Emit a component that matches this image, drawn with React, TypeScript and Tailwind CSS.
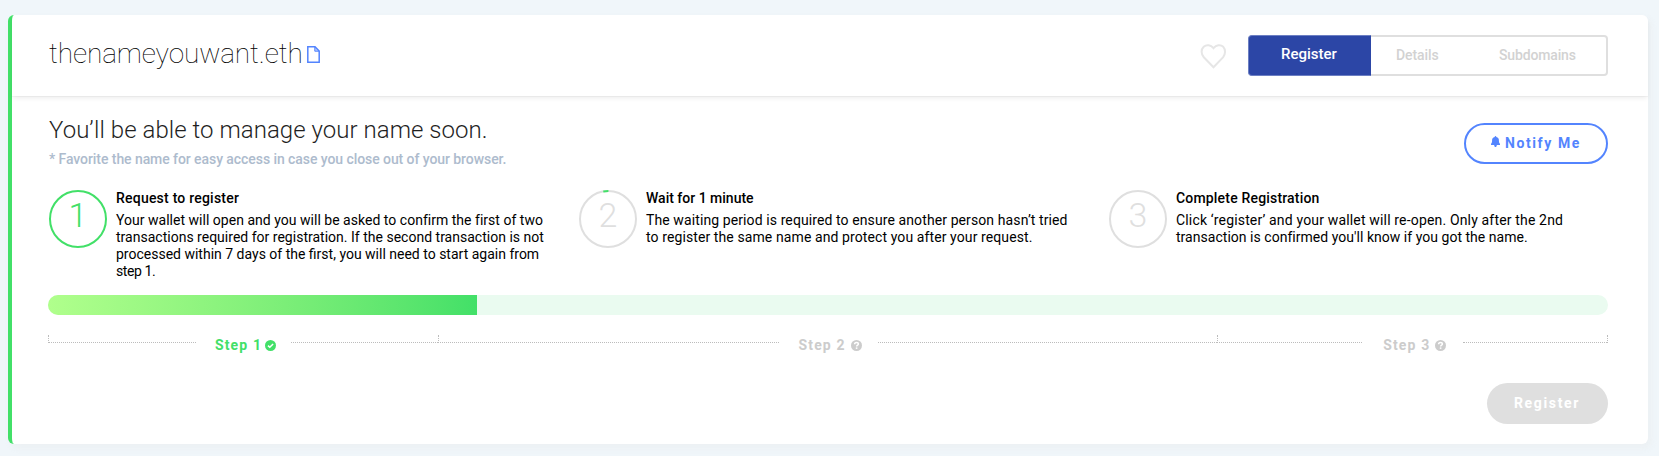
import type { ReactNode } from 'react';

type Line = { text: string; className: string };
type Step = { digit: string; title: string; lines: Line[]; active?: boolean; waiting?: boolean; titleClass: string };

const steps: Step[] = [
  {
    digit: '1',
    title: 'Request to register',
    lines: [
      { text: 'Your wallet will open and you will be asked to confirm the first of two', className: 'tracking-[0.02px]' },
      { text: 'transactions required for registration. If the second transaction is not', className: 'tracking-[0.01px]' },
      { text: 'processed within 7 days of the first, you will need to start again from', className: 'tracking-normal' },
      { text: 'step 1.', className: 'tracking-[-0.4px]' },
    ],
    active: true,
    titleClass: 'tracking-[0.22px]',
  },
  {
    digit: '2',
    title: 'Wait for 1 minute',
    lines: [
      { text: 'The waiting period is required to ensure another person hasn’t tried', className: 'tracking-[0.1px]' },
      { text: 'to register the same name and protect you after your request.', className: 'tracking-[0.1px]' },
    ],
    waiting: true,
    titleClass: 'tracking-normal',
  },
  {
    digit: '3',
    title: 'Complete Registration',
    lines: [
      { text: 'Click ‘register’ and your wallet will re-open. Only after the 2nd', className: 'tracking-[0.165px]' },
      { text: "transaction is confirmed you'll know if you got the name.", className: 'tracking-[0.03px]' },
    ],
    titleClass: 'tracking-[0.18px]',
  },
];

function StepCircle({ digit, active, waiting }: { digit: string; active?: boolean; waiting?: boolean }) {
  return (
    <div className={`relative mt-0.5 flex h-[58px] w-[58px] shrink-0 justify-center rounded-full border-2 ${active ? 'border-[#42e068] text-[#42e068]' : 'border-[#dfdfdf] text-[#dfdfdf]'}`}>
      <span className="pt-[3px] text-[34px] leading-10 font-[350]">{digit}</span>
      {waiting && (
        <svg className="absolute -top-0.5 left-[22px]" width="6" height="3" viewBox="0 0 6 3">
          <path d="M0.3 1.4 Q3 1 5.4 1" fill="none" stroke="#42e068" strokeWidth="2" />
        </svg>
      )}
    </div>
  );
}

function CheckIcon() {
  return (
    <svg width="11" height="11" viewBox="0 0 11 11" className="mt-px">
      <circle cx="5.5" cy="5.5" r="5.5" fill="#42e068" />
      <path d="M3 5.6 4.8 7.3 8.1 4" fill="none" stroke="#fff" strokeWidth="1.5" />
    </svg>
  );
}

function QuestionIcon() {
  return (
    <svg width="11" height="11" viewBox="0 0 11 11" className="mt-px">
      <circle cx="5.5" cy="5.5" r="5.5" fill="#ccc" />
      <path d="M3.6 4.2C3.6 3 4.4 2.4 5.5 2.4S7.4 3 7.4 4.1C7.4 5.3 5.6 5.2 5.6 6.6" fill="none" stroke="#fff" strokeWidth="1.5" />
      <rect x="4.8" y="7.4" width="1.6" height="1.5" fill="#fff" />
    </svg>
  );
}

function Segment({ label, icon, className, gap }: { label: string; icon: ReactNode; className: string; gap: string }) {
  return (
    <div className={`flex h-2 ${className}`}>
      <div className="h-2 flex-1 border-b border-l border-dotted border-[#bcbcbc]" />
      <div className={`flex shrink-0 items-center pt-2.5 text-sm leading-5 font-bold tracking-[1.15px] ${gap}`}>
        <span>{label}</span>
        {icon}
      </div>
      <div className="h-2 flex-1 border-b border-dotted border-[#bcbcbc]" />
    </div>
  );
}

export default function App() {
  return (
    <div className="h-[456px] overflow-hidden bg-[#f0f6fa] pt-[15px] pr-[11px] pl-2 font-[Roboto,sans-serif] whitespace-nowrap text-black">
      <main className="h-[429px] rounded-md border-l-4 border-[#42e068] bg-white shadow-[3px_4px_6px_rgba(229,229,229,0.3)]">
        <header className="flex h-[81px] items-center justify-between rounded-tr-md pr-10 pl-[37px] shadow-[0_3px_5px_-1px_rgba(0,0,0,0.08),0_1px_0_rgba(0,0,0,0.03)]">
          <h1 className="flex items-center pb-1 text-[28px] leading-9 font-thin tracking-[-0.12px]">
            thenameyouwant.eth
            <svg className="mt-0.5 ml-1" width="13" height="17" viewBox="0 0 13 17">
              <path d="M0.8 0.8H8L12.2 5V16.2H0.8Z" fill="none" stroke="#5384fe" strokeWidth="1.5" />
              <path d="M7.8 1V5.2H12" fill="#5384fe" fillOpacity=".4" stroke="#5384fe" />
            </svg>
          </h1>
          <div className="flex items-center">
            <svg className="mt-px mr-[22px]" width="26" height="25" viewBox="0 0 26 25">
              <path d="M13.5 23.3 3.8 13.2C0.9 10.1 0.9 5.4 3.7 2.8 6.6 0.2 10.7 0.8 13.5 4.2 16.3 0.8 20.4 0.2 23.3 2.8 25.6 5.4 25.6 10.1 23.2 13.2Z" fill="none" stroke="#e6e6e6" strokeWidth="2" />
            </svg>
            <nav className="flex h-[41px] w-[360px] rounded-[4px] bg-white text-sm font-medium text-[#d2d2d2]">
              <div className="flex w-[123px] items-center justify-center rounded-l-[4px] border border-[#6c7fc3] border-r-[#2c46a6] bg-[#2c46a6] pr-px pb-0.5 text-[15px] text-white">Register</div>
              <div className="flex flex-1 items-center rounded-r-[4px] border-2 border-l-0 border-[#dfdfdf] pb-0.5 pl-[25px]">
                <span className="w-[103px] tracking-[-0.1px]">Details</span>
                <span className="tracking-[-0.15px]">Subdomains</span>
              </div>
            </nav>
          </div>
        </header>

        <section className="flex flex-col pr-10 pl-9">
          <div className="flex justify-between pt-[19px]">
            <div className="pl-px">
              <h2 className="text-2xl leading-[30px] font-light tracking-[0.04px] text-[#1f1f1f]">You’ll be able to manage your name soon.</h2>
              <p className="mt-1 text-sm leading-5 font-medium tracking-[-0.07px] text-[#adbbcd]">
                * Favorite the name for easy access in case you close out of your browser.
              </p>
            </div>
            <button className="mt-2 flex h-[41px] w-36 items-center rounded-full border-2 border-[#5384fe] pb-0.5 pl-[25px] text-sm font-bold tracking-[1.6px] text-[#5384fe]">
              <svg className="-mt-0.5 mr-[5px]" width="9" height="11" viewBox="0 0 9 11">
                <path d="M4.5 0C5 0 5.3.4 5.3.9 7.2 1.3 7.9 2.5 7.9 4.2 7.9 6.3 8.2 7 9 7.8V9H0V7.8C.8 7 1.1 6.3 1.1 4.2 1.1 2.5 1.8 1.3 3.7.9 3.7.4 4 0 4.5 0ZM3.2 9H5.8C5.8 10.4 5.2 11 4.5 11S3.2 10.4 3.2 9Z" fill="#5384fe" />
              </svg>
              Notify Me
            </button>
          </div>

          <div className="mt-[19px] flex h-[92px] pl-px">
            {steps.map((s) => (
              <article key={s.digit} className="flex w-[530px] shrink-0 gap-[9px]">
                <StepCircle digit={s.digit} active={s.active} waiting={s.waiting} />
                <div className="text-sm">
                  <h3 className={`leading-5 font-medium ${s.titleClass}`}>{s.title}</h3>
                  <p className="mt-1 leading-[17px]">
                    {s.lines.map((l) => <span key={l.text} className={`block ${l.className}`}>{l.text}</span>)}
                  </p>
                </div>
              </article>
            ))}
          </div>

          <div className="mt-[15px] h-5 overflow-hidden rounded-[10px] bg-[#eafbf0]">
            <div className="h-5 w-[27.5%] bg-linear-to-r from-[#b0ff8c] to-[#42e068]" />
          </div>

          <div className="mt-5 flex h-2 border-r border-dotted border-[#bcbcbc]">
            <Segment label="Step 1" icon={<CheckIcon />} className="w-[25%] text-[#42e068]" gap="w-[95px] gap-[3px] pl-[19px]" />
            <Segment label="Step 2" icon={<QuestionIcon />} className="w-[50%] text-[#ccc]" gap="w-[99px] gap-[5px] pl-5" />
            <Segment label="Step 3" icon={<QuestionIcon />} className="w-[25%] text-[#ccc]" gap="w-[101px] gap-[5px] pl-[21px]" />
          </div>

          <button className="mt-10 flex h-[41px] w-[121px] items-center self-end rounded-full bg-[#dfdfdf] pb-0.5 pl-[27px] text-sm font-bold tracking-[1.65px] text-white">
            Register
          </button>
        </section>
      </main>
    </div>
  );
}
